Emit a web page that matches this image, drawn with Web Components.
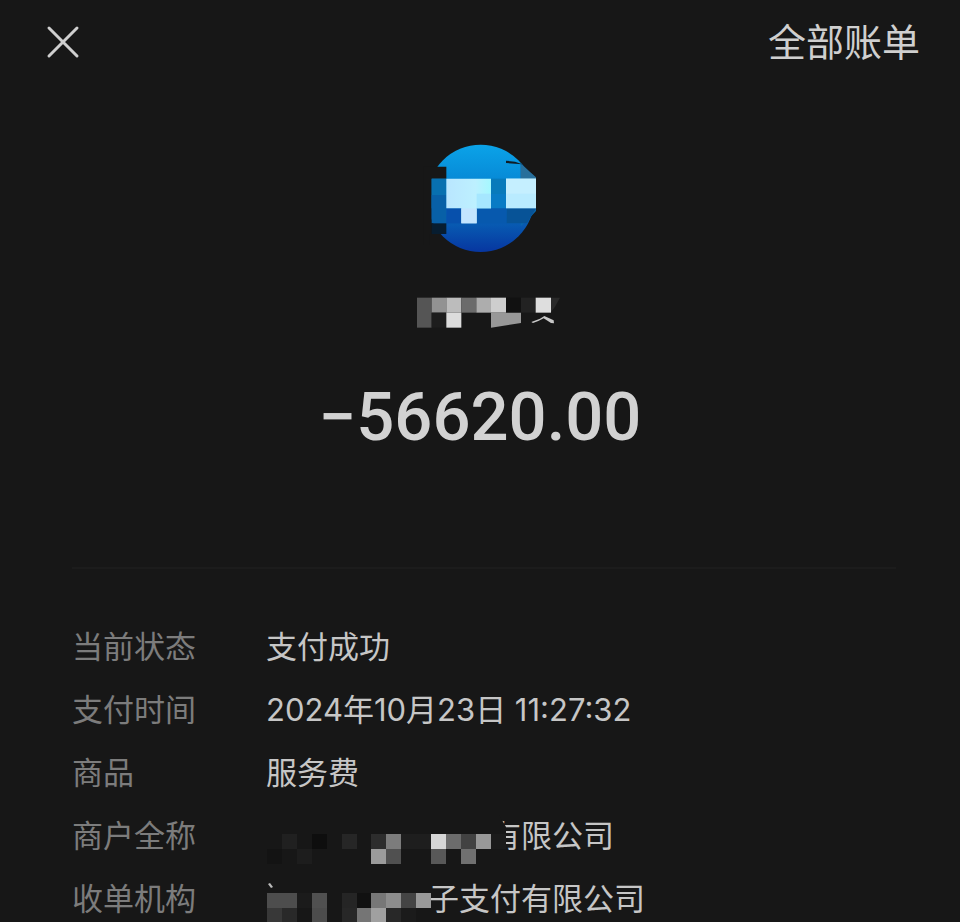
<!DOCTYPE html>
<html lang="zh-CN">
<head>
<meta charset="utf-8">
<meta name="viewport" content="width=device-width, initial-scale=1">
<title>账单详情</title>
<style>
  html { background: #171717; }
  body { margin: 0; color: #cfcfcf; font-family: Inter, "Noto Sans CJK SC", sans-serif; }
</style>
</head>
<body>
<bill-page>
  <bill-header slot="header"></bill-header>
  <bill-summary slot="summary">−56620.00</bill-summary>
  <bill-row label="当前状态">支付成功</bill-row>
  <bill-row label="支付时间">2024年10月23日 11:27:32</bill-row>
  <bill-row label="商品">服务费</bill-row>
  <bill-row label="商户全称" mosaic="merchant">有限公司</bill-row>
  <bill-row label="收单机构" mosaic="acquirer">子支付有限公司</bill-row>
</bill-page>
<script>
const define = (name, html, setup) => customElements.define(name, class extends HTMLElement {
  constructor() {
    super();
    const t = document.createElement('template');
    t.innerHTML = html;
    this.attachShadow({ mode: 'open' }).append(t.content.cloneNode(true));
  }
  connectedCallback() { if (setup) setup(this); }
});

define('bill-page', `
  <style>
    :host { display: block; min-height: 100vh; overflow: hidden; box-sizing: border-box; }
    main { padding: 0 64px 0 72px; }
    hr { border: 0; height: 2px; margin: 0 0 57px; background: #1c1c1c; }
    .rows { display: flex; flex-direction: column; gap: 21px; margin: 0; }
  </style>
  <slot name="header"></slot>
  <slot name="summary"></slot>
  <main><hr><div class="rows"><slot></slot></div></main>`);

define('bill-header', `
  <style>
    :host { display: block; }
    header { display: flex; align-items: center; justify-content: space-between; height: 84px; padding: 0 40px; }
    button { display: flex; padding: 6px; border: 0; background: none; color: inherit; cursor: pointer; }
    a { color: inherit; text-decoration: none; font-size: 38px; line-height: 56px; }
  </style>
  <header>
    <button type="button" aria-label="关闭">
      <svg width="34" height="34" viewBox="0 0 34 34" fill="none" stroke="currentColor" stroke-width="3" stroke-linecap="round" aria-hidden="true"><path d="M3 3 31 31M31 3 3 31"/></svg>
    </button>
    <a href="#bills">全部账单</a>
  </header>`);

define('bill-summary', `
  <style>
    :host { display: flex; flex-direction: column; align-items: center; padding-top: 51px; }
    svg { display: block; overflow: visible; }
    .name { margin: 20px 0 42px; }
    .amount { font: 500 67px/80px Roboto, sans-serif; color: #d2d2d2; margin-bottom: 110px; }
  </style>
  <svg width="120" height="125" viewBox="0 0 360 375" aria-hidden="true">
    <defs>
      <linearGradient id="b" x1="0" y1="0" x2="0" y2="1"><stop offset="0" stop-color="#0ba3e8"/><stop offset=".3" stop-color="#078cd8"/><stop offset=".65" stop-color="#0867b8"/><stop offset="1" stop-color="#0736a0"/></linearGradient>
      <linearGradient id="c" x1="0" y1="0" x2="1" y2="0"><stop offset="0" stop-color="#b9e6ff"/><stop offset=".65" stop-color="#bdf0ff"/><stop offset="1" stop-color="#a5f8ff"/></linearGradient>
    </defs>
    <circle cx="182" cy="190" r="161" fill="url(#b)"/>
    <path d="M302 84 348 130V228L326 252 302 274Z" fill="#0967ae"/>
    <path d="M302 86 348 127V132H302Z" fill="#286f9b"/>
    <path d="M258 77 285 80 307 88 258 84Z" fill="#101c24"/>
    <path d="M10 95H79V131H35V330H10Z" fill="#171717"/>
    <path d="M35 131H79V220H35Z" fill="#0870b0"/>
    <path d="M35 180H79V265H35Z" fill="#0860a7"/>
    <path d="M79 220H124V265H79Z" fill="#0750ac"/>
    <path d="M213 131H258V177H213Z" fill="#087abb"/>
    <path d="M213 177H258V220H213Z" fill="#087bc5"/>
    <path d="M170 220H260V265H170Z" fill="#0759ae"/>
    <path d="M260 220H348L330 250 321 265H260Z" fill="#075397"/>
    <path d="M35 265H79V297H35Z" fill="#071d30"/>
    <path d="M28 297H60V330H28Z" fill="#171717"/>
    <path d="M79 131H213V220H170V265H124V220H79Z" fill="url(#c)"/>
    <path d="M170 176H213V220H170Z" fill="#a6e7ff"/>
    <path d="M124 220H170V265H124Z" fill="#c3e5ff"/>
    <path d="M258 131H348V220H258Z" fill="#b9ebff"/>
    <path d="M258 131H348V176H258Z" fill="#c5efff"/>
  </svg>
  <svg class="name" width="150" height="55" viewBox="0 0 450 165" aria-hidden="true">
    <path d="M36 53H80V143H36Z" fill="#555"/><path d="M80 53H124V98H80Z" fill="#929292"/>
    <path d="M80 98H124V143H80Z" fill="#1d1d1d"/>
    <path d="M124 53H169V98H124Z" fill="#bcbcbc"/><path d="M124 98H169V143H124Z" fill="#dcdcdc"/>
    <path d="M169 53H214V98H169Z" fill="#6b6b6b"/><path d="M214 53H258V98H214Z" fill="#adadad"/>
    <path d="M258 53H303V98H258Z" fill="#cecece"/><path d="M303 53H348V98H303Z" fill="#111"/>
    <path d="M258 98H348V129L258 143Z" fill="#989898"/><path d="M348 53H392V98H348Z" fill="#222"/>
    <path d="M392 53H438V98H392Z" fill="#dedede"/><path d="M438 53H465L450 80 438 96Z" fill="#292929"/>
    <path d="M379 126 405 116 418 108 446 121 447 130 438 129 416 115 400 123 384 129Z" fill="#c8c8c8"/>
  </svg>
  <div class="amount"><slot></slot></div>`);

// Mosaics over the hidden start of a name; each cell is [column, row, colour] on a 15px grid.
const mosaics = {
  merchant: { width: 236, overlap: 12, top: 19, base: '<path d="M0 0H233L240 12V42H0Z" fill="#171717"/>', cells: [
    [1,0,'#202020'],[3,0,'#0e0e0e'],[5,0,'#262626'],[7,0,'#2d2d2d'],[8,0,'#7c7c7c'],[9,0,'#1e1e1e'],[10,0,'#1e1e1e'],
    [11,0,'#d6d6d6'],[12,0,'#6c6c6c'],[13,0,'#424242'],[14,0,'#989898'],[15,0,'#1b1b1b'],
    [0,1,'#131313'],[2,1,'#1d1d1d'],[7,1,'#9b9b9b'],[8,1,'#505050'],[11,1,'#585858'],[13,1,'#707070']] },
  acquirer: { width: 166, overlap: 4, top: 15, base: '<path d="M2 6 4 5 7 9 5 10Z" fill="#bbb"/>', cells: [
    [0,0,'#4d4d4d'],[1,0,'#4d4d4d'],[2,0,'#1b1b1b'],[3,0,'#505050'],[5,0,'#252525'],[6,0,'#111'],[7,0,'#777'],
    [8,0,'#8d8d8d'],[9,0,'#444'],[10,0,'#999'],
    [0,1,'#383838'],[1,1,'#292929'],[3,1,'#4c4c4c'],[5,1,'#272727'],[6,1,'#757575'],[7,1,'#a0a0a0'],[8,1,'#282828'],[9,1,'#1b1b1b']] }
};
function mosaicMarkup({ width, overlap, top, base, cells }) {
  const squares = cells.map(([c, r, fill]) =>
    `<rect x="${1 + Math.round(c * 14.92)}" y="${top + r * 15}" width="15" height="15" fill="${fill}"/>`).join('');
  return `<svg width="${width}" height="42" viewBox="0 0 ${width} 42" style="margin-right:-${overlap}px" aria-hidden="true">${base}${squares}</svg>`;
}

define('bill-row', `
  <style>
    :host { display: grid; grid-template-columns: 194px 1fr; font-size: 31px; line-height: 42px; height: 42px; }
    .label { color: #7c7c7c; }
    .value { display: flex; align-items: center; white-space: pre; color: #c6c6c6; }
    svg { display: block; flex: none; overflow: visible; position: relative; z-index: 1; }
  </style>
  <span class="label" id="l"></span>
  <span class="value" aria-labelledby="l"><slot></slot></span>`,
  el => {
    const root = el.shadowRoot, mosaic = mosaics[el.getAttribute('mosaic')];
    root.getElementById('l').textContent = el.getAttribute('label');
    if (mosaic) root.querySelector('.value').insertAdjacentHTML('afterbegin', mosaicMarkup(mosaic));
  });
</script>
</body>
</html>
